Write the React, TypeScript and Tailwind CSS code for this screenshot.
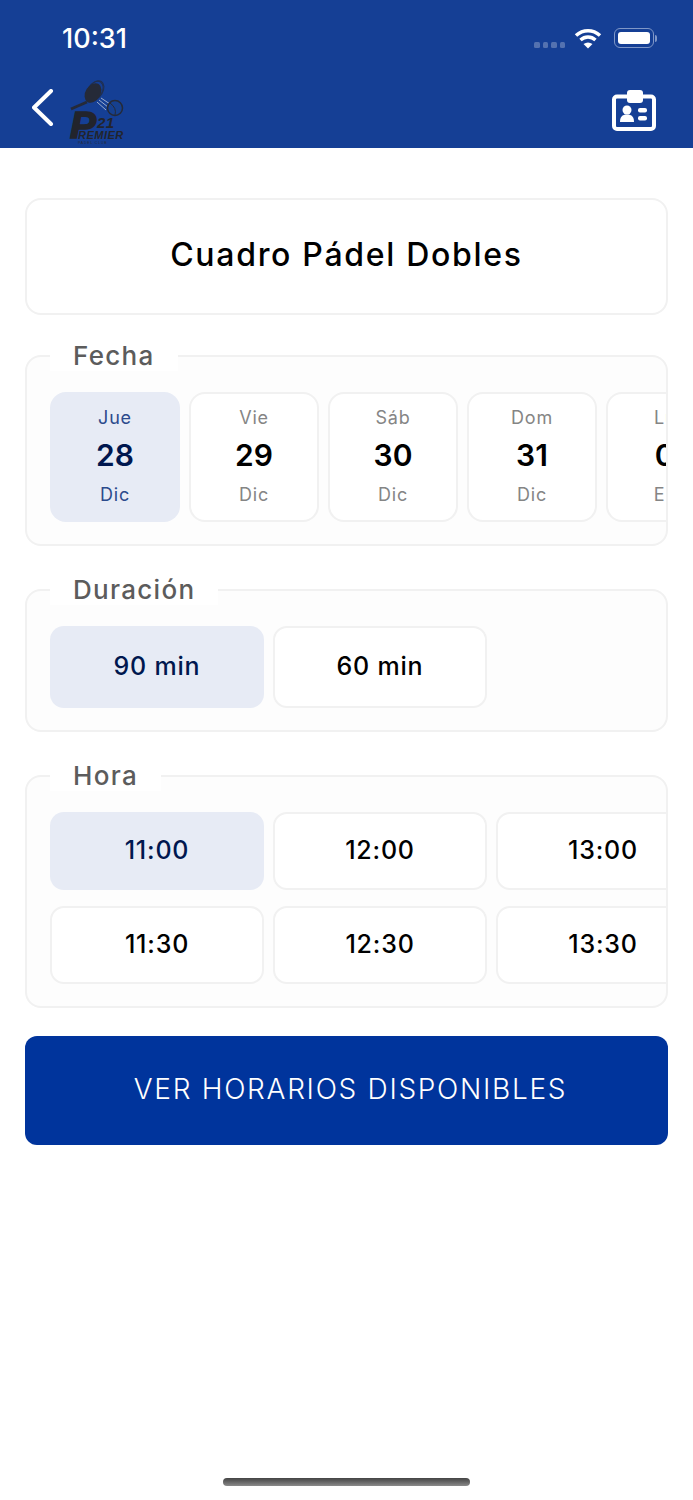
const DAYS = [
  { top: 'Jue', num: '28', bottom: 'Dic', active: true },
  { top: 'Vie', num: '29', bottom: 'Dic' },
  { top: 'Sáb', num: '30', bottom: 'Dic' },
  { top: 'Dom', num: '31', bottom: 'Dic' },
  { top: 'Lun', num: '01', bottom: 'Ene' },
]

function Logo() {
  return (
    <svg width="60" height="68" viewBox="0 0 60 68" className="shrink-0 ml-[14px] mt-[2px]">
      <g fill="none" stroke="#252a38" strokeWidth="1" opacity="0.75">
        <ellipse cx="28" cy="12" rx="7" ry="10" transform="rotate(32 28 12)" />
        <ellipse cx="27" cy="13" rx="7" ry="10.500" transform="rotate(32 27 13)" />
      </g>
      <ellipse cx="25" cy="15" rx="7.500" ry="10.500" transform="rotate(32 25 15)" fill="#252a38" />
      <path d="M19 24 L3 31" stroke="#252a38" strokeWidth="3" />
      <path d="M31 22 L40 29 M33 20 L42 26 M29 24 L38 32" stroke="#9aaacb" strokeWidth="1" />
      <circle cx="47" cy="30" r="7.500" fill="#16408f" stroke="#252a38" strokeWidth="1.500" />
      <path d="M42 25 Q49 30 47 37" fill="none" stroke="#252a38" strokeWidth="1" />
      <text x="2" y="60" fontFamily="Liberation Sans" fontWeight="700" fontStyle="italic" fontSize="36" textLength="26" lengthAdjust="spacingAndGlyphs" stroke="#22242c" strokeWidth="1.500" fill="#22242c">P</text>
      <text x="29" y="50" fontFamily="Liberation Sans" fontWeight="700" fontStyle="italic" fontSize="15" letterSpacing="0.500" fill="#22242c">21</text>
      <text x="10" y="61" fontFamily="Liberation Sans" fontWeight="700" fontStyle="italic" fontSize="11" letterSpacing="0.500" fill="#22242c">REMIER</text>
      <text x="10" y="66" fontFamily="Liberation Sans" fontSize="3.500" letterSpacing="0.800" fill="#252a38">PADEL CLUB</text>
    </svg>
  )
}

function IdCard() {
  return (
    <svg width="46" height="42" viewBox="0 0 46 42" fill="white">
      <rect x="3" y="6.500" width="40" height="32.500" rx="3" fill="none" stroke="white" strokeWidth="4" />
      <rect x="16" y="0" width="16" height="13" rx="3" />
      <circle cx="16" cy="20" r="4.500" />
      <path d="M9 32c0-5 2-7.500 7-7.500s7 2.500 7 7.500Z" />
      <rect x="27" y="18" width="9" height="4.500" rx="2" />
      <rect x="27" y="26" width="9" height="4.500" rx="2" />
    </svg>
  )
}

function Section({ title, children, className }: { title: string; children: React.ReactNode; className: string }) {
  return (
    <fieldset className={`min-w-0 border-2 border-[#f1f1f1] rounded-[16px] bg-[#fdfdfd] pl-[23px] ${className}`}>
      <legend className="px-[23px] bg-white text-[26px] leading-[30px] font-medium tracking-[1.300px] text-[#5c5c5c]">{title}</legend>
      {children}
    </fieldset>
  )
}

function Slot({ label, active }: { label: string; active?: boolean }) {
  return (
    <div className={`w-[214px] shrink-0 flex items-center justify-center rounded-[14px] text-[25px] font-medium tracking-[0.8px]
      ${active ? 'bg-[#e7ebf5] text-[#00174f]' : 'bg-white border-2 border-[#f1f1f1] text-black'}`}>
      {label}
    </div>
  )
}

export default function App() {
  return (
    <div className="w-[693px] h-[1500px] bg-white relative font-['Inter',sans-serif]">
      {/* Header */}
      <div className="h-[148px] bg-[#153f95] text-white">
        <div className="h-[76px] flex items-start pl-[62px] pr-[36px] pt-[20px]">
          <span className="text-[27px] leading-[36px] font-medium mt-[1px]">10:31</span>
          <div className="ml-auto flex items-start">
            <div className="flex gap-[3px] mt-[22px] mr-[9px]">
              {[0, 1, 2, 3].map((i) => <span key={i} className="w-[5.500px] h-[5.500px] rounded-[1.500px] bg-[#5472b0]" />)}
            </div>
            <svg width="28" height="21" viewBox="0 0 28 21" className="mt-[8px] mr-[12px]" fill="none" stroke="white" strokeWidth="3.500">
              <path d="M2 7.500C9 1 19 1 26 7.500" />
              <path d="M6.500 12C11 8 17 8 21.500 12" />
              <path d="M14 20.500l-4.500-4.500q4.500-3 9 0Z" fill="white" stroke="none" />
            </svg>
            <div className="mt-[8px] w-[40px] h-[20px] rounded-[6px] border border-[#7f97c7] p-[3px]">
              <div className="w-full h-full rounded-[3px] bg-white" />
            </div>
            <div className="w-[2px] h-[7px] mt-[14.500px] ml-[1px] rounded-r-[2px] bg-[#7f97c7]" />
          </div>
        </div>
        <div className="flex items-start pl-[32px] pr-[36px]">
          <svg width="22" height="38" viewBox="0 0 22 38" className="mt-[13px]" fill="none" stroke="white" strokeWidth="4" strokeLinecap="round" strokeLinejoin="round">
            <path d="M19 2 L2 18.500 L19 35" />
          </svg>
          <Logo />
          <div className="ml-auto mt-[14px]"><IdCard /></div>
        </div>
      </div>

      {/* Content */}
      <div className="pl-[25px] pr-[25px] pt-[50px]">
        <div className="h-[117px] border-2 border-[#f1f1f1] rounded-[16px] flex items-center justify-center pb-[4px] text-[32px] font-medium tracking-[1.700px] text-black">
          Cuadro Pádel Dobles
        </div>

        <Section title="Fecha" className="mt-[26px] h-[205px]">
          <div className="flex gap-[9px] overflow-hidden mt-[21px]">
            {DAYS.map((d) => (
              <div key={d.num} className={`w-[130px] h-[130px] shrink-0 rounded-[16px] border-2 flex flex-col items-center pt-[11px]
                ${d.active ? 'bg-[#e7ebf5] border-transparent' : 'bg-white border-[#f1f1f1]'}`}>
                <span className={`text-[18px] leading-[26px] tracking-[0.8px] ${d.active ? 'text-[#2c4a8c]' : 'text-[#858585]'}`}>{d.top}</span>
                <span className={`text-[30px] leading-[40px] mt-[4px] font-semibold ${d.active ? 'text-[#00174f]' : 'text-black'}`}>{d.num}</span>
                <span className={`text-[18px] leading-[26px] mt-[7px] tracking-[0.8px] ${d.active ? 'text-[#2c4a8c]' : 'text-[#858585]'}`}>{d.bottom}</span>
              </div>
            ))}
          </div>
        </Section>

        <Section title="Duración" className="mt-[29px] h-[157px]">
          <div className="flex gap-[9px] h-[82px] mt-[21px]">
            <Slot label="90 min" active />
            <Slot label="60 min" />
          </div>
        </Section>

        <Section title="Hora" className="mt-[29px] h-[247px]">
          <div className="flex flex-col gap-[16px] overflow-hidden mt-[21px]">
            <div className="flex gap-[9px] h-[78px]">
              <Slot label="11:00" active />
              <Slot label="12:00" />
              <Slot label="13:00" />
            </div>
            <div className="flex gap-[9px] h-[78px]">
              <Slot label="11:30" />
              <Slot label="12:30" />
              <Slot label="13:30" />
            </div>
          </div>
        </Section>

        <button className="mt-[28px] w-full h-[109px] rounded-[12px] bg-[#00349c] text-white text-[28px] font-light tracking-[1.700px] pl-[8px] pb-[3px]">
          VER HORARIOS DISPONIBLES
        </button>
      </div>

      {/* Home indicator */}
      <div className="absolute left-[223px] top-[1478px] w-[247px] h-[8px] rounded-full bg-gradient-to-b from-[#444444] to-[#8a8a8a]" />
    </div>
  )
}
